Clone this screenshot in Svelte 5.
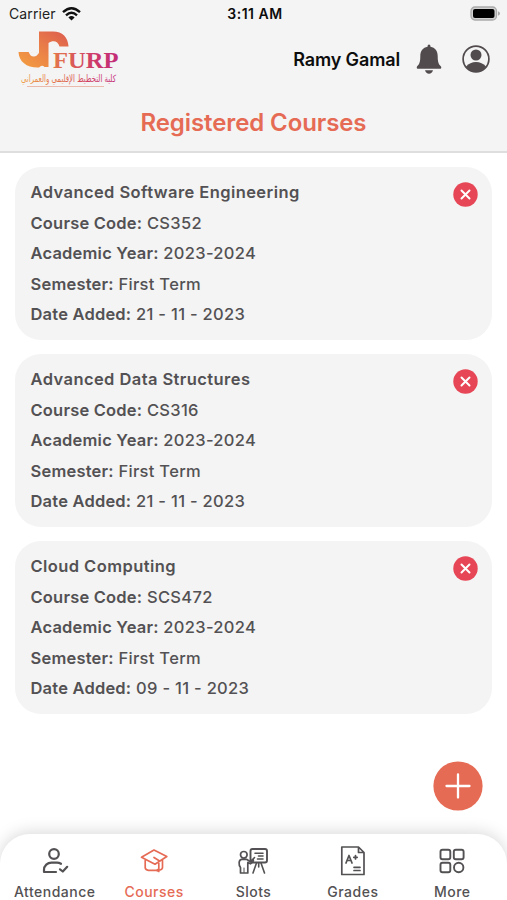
<script>
  const courses = [
    { name: 'Advanced Software Engineering', code: 'CS352', date: '21 - 11 - 2023' },
    { name: 'Advanced Data Structures', code: 'CS316', date: '21 - 11 - 2023' },
    { name: 'Cloud Computing', code: 'SCS472', date: '09 - 11 - 2023' }
  ];
  const tabs = ['Attendance', 'Courses', 'Slots', 'Grades', 'More'];
</script>

<div class="screen">
  <header>
    <div class="status">
      <div class="carrier">
        <span>Carrier</span>
        <svg width="19" height="14" viewBox="0 0 19 14" fill="none" stroke="#111" stroke-width="2.4">
          <path d="M1 5.2Q9.500-2.600 18 5.200M4 8.300Q9.500 3.300 15 8.300" />
          <path d="M6.400 10.400Q9.500 7.700 12.600 10.400L9.500 13.500Z" fill="#111" stroke="none" />
        </svg>
      </div>
      <span class="time">3:11 AM</span>
      <svg class="battery" width="31" height="16" viewBox="0 0 31 16">
        <rect x="1" y="1" width="25.500" height="13" rx="4" fill="#d2d2d2" stroke="#aaa" stroke-width="1.300" />
        <rect x="3" y="3" width="21.500" height="9" rx="2" fill="#000" />
        <path d="M28 5.200Q30 6 30 7.500T28 9.800Z" fill="#aaa" />
      </svg>
    </div>
    <div class="brand">
      <svg class="logo" width="120" height="62" viewBox="0 0 120 62">
        <defs>
          <linearGradient id="mark" x1="0" y1="1" x2="1" y2="0"><stop stop-color="#f4a040" /><stop offset=".5" stop-color="#ea8048" /><stop offset="1" stop-color="#dc5b4e" /></linearGradient>
          <linearGradient id="word" gradientUnits="userSpaceOnUse" x1="5" y1="0" x2="104" y2="0"><stop stop-color="#efa04c" /><stop offset=".45" stop-color="#df6850" /><stop offset=".75" stop-color="#cd396b" /><stop offset="1" stop-color="#c12c78" /></linearGradient>
        </defs>
        <path d="M3.500 22H13.500L15 23.500L17 22.500L19 24L22 22.500L24 23.500V1.500H37C47 1 53 7 53.500 16.500H44.500C43 11 38 10 33.500 13V37H29.500Q27 34.500 24 37.500C12 38 4 32 3.500 22Z" fill="url(#mark)" />
        <path d="M14 22.300Q15 26.500 18.700 26.500T24 22.300Z" fill="#f4f4f4" />
        <text x="38" y="37.500" textLength="65.500" lengthAdjust="spacingAndGlyphs" class="furp">FURP</text>
        <text x="53.500" y="51.500" textLength="95" lengthAdjust="spacingAndGlyphs" text-anchor="middle" class="arabic">كلية التخطيط الإقليمي والعمراني</text>
        <path d="M12 56.500H89" stroke="#e6a08e" stroke-width=".7" />
      </svg>
      <div class="user">
        <span>Ramy Gamal</span>
        <svg class="bell" width="26" height="30" viewBox="0 0 26 30" fill="#514b4d">
          <path d="M13 .5Q14.500.5 14.500 2.800C19 3.600 21.700 7 21.700 12C21.700 18 22.500 20 25 22.500Q26 24.800 23.500 24.800H2.500Q0 24.800 1 22.500C3.500 20 4.300 18 4.300 12C4.300 7 7 3.600 11.500 2.800Q11.500.5 13 .5Z" />
          <path d="M9 26.300H17Q16 29.700 13 29.700T9 26.300Z" />
        </svg>
        <svg width="28" height="28" viewBox="0 0 28 28">
          <circle cx="14" cy="14" r="12.900" fill="none" stroke="#514b4d" stroke-width="1.700" />
          <circle cx="14" cy="10" r="5.500" fill="#514b4d" />
          <path d="M4 21.500Q8 17 14 17T24 21.500Q20 27 14 27T4 21.500Z" fill="#514b4d" />
        </svg>
      </div>
    </div>
    <h1>Registered Courses</h1>
  </header>

  <main>
    {#each courses as course}
      <article>
        <div class="details">
          <h2>{course.name}</h2>
          <p><b>Course Code:</b> {course.code}</p>
          <p><b>Academic Year:</b> 2023-2024</p>
          <p><b>Semester:</b> First Term</p>
          <p><b>Date Added:</b> {course.date}</p>
        </div>
        <svg class="remove" width="25" height="25" viewBox="0 0 25 25">
          <circle cx="12.500" cy="12.500" r="12.200" fill="#e64655" />
          <path d="M8.500 8.500L16.500 16.500M16.500 8.500L8.500 16.500" stroke="#fff" stroke-width="2" stroke-linecap="round" />
        </svg>
      </article>
    {/each}
    <div class="add">
      <svg width="50" height="50" viewBox="0 0 50 50">
        <circle cx="25" cy="25" r="24.600" fill="#e66b55" />
        <path d="M25 13.500V36.500M13.500 25H36.500" stroke="#fff" stroke-width="2.300" stroke-linecap="round" />
      </svg>
    </div>
  </main>

  <nav>
    {#each tabs as tab, i}
      <div class="tab" class:active={i === 1}>
        <svg width="32" height="32" viewBox="0 0 32 32" fill="none" stroke="currentColor" stroke-width="1.900" stroke-linecap="round" stroke-linejoin="round">
          {#if i === 0}
            <circle cx="15" cy="9" r="4.800" stroke-width="2.200" />
            <path d="M17 27H5V25C5 20.500 8.500 17.600 12.500 17.600H18Q20 17.600 22 18.800M21 24.300L23.800 26.500L28.200 21.800" stroke-width="2.200" />
          {:else if i === 1}
            <path d="M3.500 12.300L16 5L28.800 11.500L17 19.200ZM7.200 15.500V22.500Q7.200 25 10.500 25.300H18.500M16 12.500L20.800 15.500V26.500M24.500 15.500V22.500Q24.500 24.300 22 25M19.500 24.500V26" stroke-width="1.700" />
          {:else if i === 2}
            <rect x="13.500" y="4" width="16.500" height="13.500" rx="2" />
            <path d="M18 8.300H26M21.500 11H26M20.500 14H26M19.500 18L16 28M24 18L27.500 28M21.700 18V22M17.500 12.500L14.500 16" stroke-width="1.600" />
            <circle cx="6.800" cy="9.800" r="3.300" stroke-width="1.700" />
            <path d="M3.500 28V22.500C1.500 20 1.500 15 4.500 14.300H9.500L13 16.500L16 14.500Q17.500 16 13.500 18.800L10.800 17.500V28H3.500" stroke-width="1.700" />
            <path d="M7 23V27.500" stroke-width="1" />
          {:else if i === 3}
            <path d="M4.800 2H21.500L27 7.500V29.500H4.800ZM21.500 2V7.500H27" stroke-width="1.700" />
            <path d="M17 22.300H23M17 25.500H23M9 18L12 10.500L15 18M10.100 15.500H13.900M18.500 10.600V14M16.800 12.300H20.200" stroke-width="1.700" />
          {:else}
            <rect x="4.500" y="4.800" width="9.800" height="9.500" rx="2" /><rect x="17.800" y="4.800" width="9.800" height="9.500" rx="2" />
            <rect x="4.500" y="17.700" width="9.800" height="9.500" rx="2" /><circle cx="22.700" cy="22.500" r="4.700" />
          {/if}
        </svg>
        <span>{tab}</span>
      </div>
    {/each}
  </nav>
</div>

<style>
  :global(body) { margin: 0; }
  * { box-sizing: border-box; }
  svg { display: block; flex: none; }
  .screen { width: 507px; height: 900px; display: flex; flex-direction: column; overflow: hidden; background: #fff; color: #535153; font-family: Inter, Roboto, sans-serif; white-space: nowrap; }
  header { height: 153px; flex: none; background: #f4f4f4; border-bottom: 2px solid #dedede; color: #0d0d0d; }
  .status { height: 27px; display: grid; grid-template-columns: 1fr auto 1fr; align-items: center; padding: 0 6px 0 9px; }
  .carrier { display: flex; gap: 6px; align-items: center; font-size: 14px; letter-spacing: .1px; color: #222; }
  .time { font-size: 14px; font-weight: 600; letter-spacing: .5px; }
  .battery { justify-self: end; }
  .brand { height: 64px; display: flex; justify-content: space-between; padding: 3px 17px 0 15px; }
  .logo { overflow: visible; }
  .furp { font: bold 24px "Liberation Serif", serif; fill: url(#word); }
  .arabic { font: 10px "DejaVu Sans", sans-serif; fill: url(#word); }
  .user { display: flex; align-items: center; height: 58px; font-size: 18px; font-weight: 600; letter-spacing: -.13px; }
  .bell { margin: 0 20px 0 16px; }
  h1 { margin: 0; height: 62px; line-height: 63px; text-align: center; color: #e66b55; font-size: 24px; font-weight: 600; letter-spacing: -.1px; }
  main { flex: 1; min-height: 0; display: flex; flex-direction: column; gap: 14px; padding: 14px 15px 0; }
  article { height: 173px; flex: none; border-radius: 26px; background: #f4f4f4; display: flex; justify-content: space-between; padding: 10px 14px 0 15.5px; }
  h2, p { margin: 0; height: 30.6px; line-height: 30.6px; font-size: 16.500px; font-weight: 500; letter-spacing: .3px; }
  h2 { font-weight: 600; letter-spacing: .42px; }
  b { font-weight: 600; letter-spacing: .2px; }
  .remove { margin-top: 4.5px; }
  .add { align-self: flex-end; margin: 33px 9px 0 0; }
  nav { height: 66px; flex: none; display: grid; grid-template-columns: repeat(5, 1fr); padding: 11px 5px 0; background: #fff; border-radius: 30px 30px 0 0; box-shadow: 0 -2px 16px #00000026; }
  .tab { display: flex; flex-direction: column; align-items: center; gap: 3.5px; font-size: 14px; font-weight: 500; line-height: 22px; letter-spacing: .5px; }
  .active { color: #e66b55; }
</style>
